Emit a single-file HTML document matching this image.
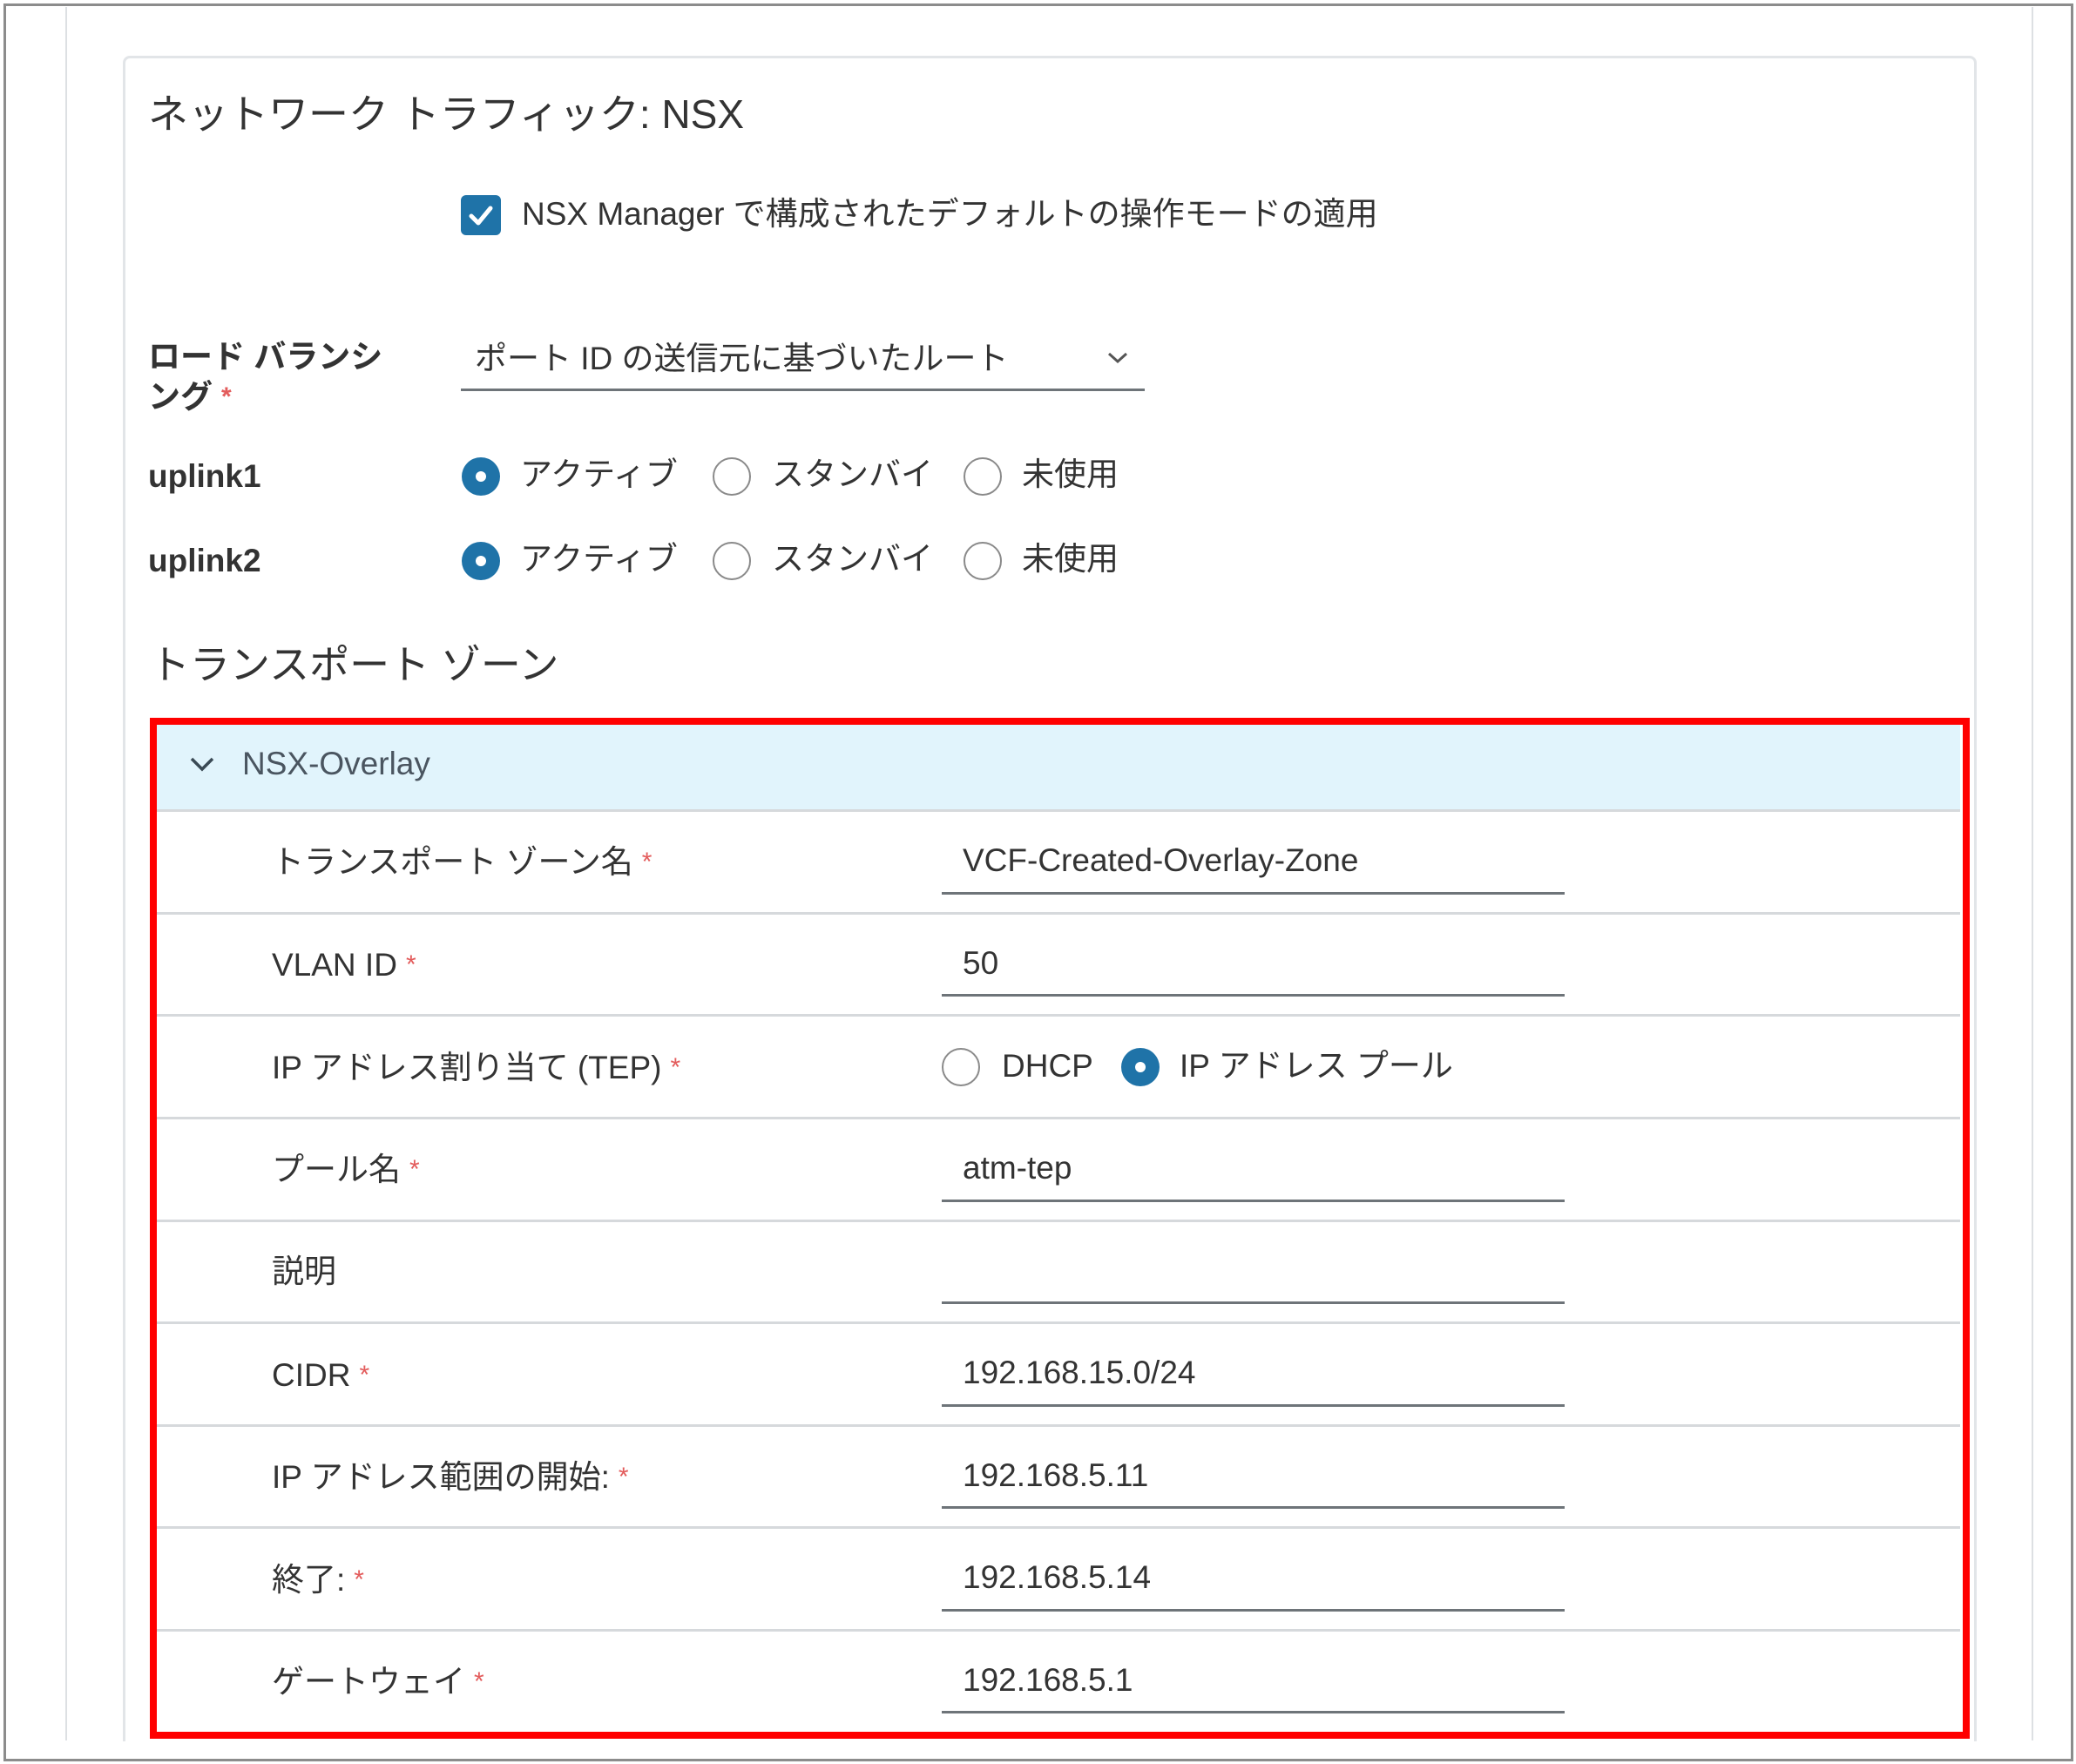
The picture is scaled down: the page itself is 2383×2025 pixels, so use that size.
<!DOCTYPE html>
<html><head><meta charset="utf-8"><style>
*{margin:0;padding:0;box-sizing:border-box}
html,body{width:2383px;height:2025px;overflow:hidden}
body{background:#fff;position:relative;font-family:"Liberation Sans","Noto Sans CJK JP",sans-serif;color:#333}
.a{position:absolute;white-space:nowrap}
.t{font-size:37px;line-height:44px;height:44px}
.req{color:#e35c5c;font-size:30px;vertical-align:top;margin-left:10px}
.rad{position:absolute;width:44px;height:44px;border-radius:50%;border:2px solid #8a8a8a;background:#fff}
.rad.on{border:none;background:#1f73a8}
.rad.on:after{content:"";position:absolute;left:16px;top:16px;width:12px;height:12px;border-radius:50%;background:#fff}
.sep{position:absolute;left:180px;width:2070px;height:3px;background:#d6d9dc}
.ul{position:absolute;left:1081px;width:715px;height:3px;background:#6e7479}
</style></head><body>
<div class="a" style="left:75px;top:8px;width:2px;height:1990px;background:#dde0e3"></div>
<div class="a" style="left:2332px;top:8px;width:2px;height:1990px;background:#dde0e3"></div>
<div class="a" style="left:141px;top:64px;width:2128px;height:1935px;border:3px solid #e2e5e8;border-bottom:none;border-radius:8px 8px 0 0"></div>
<div class="a" style="left:4px;top:4px;width:2376px;height:2018px;border:3px solid #8c8c8c"></div>

<div class="a" style="left:170px;top:105px;font-size:46px;line-height:52px;color:#333">ネットワーク トラフィック: NSX</div>

<div class="a" style="left:529px;top:224px;width:46px;height:46px;background:#1f73a8;border-radius:6px">
<svg width="46" height="46" viewBox="0 0 46 46"><path d="M12 24 L20 32 L34 15" fill="none" stroke="#fff" stroke-width="5" stroke-linecap="round" stroke-linejoin="round"/></svg></div>
<div class="a t" style="left:599px;top:224px">NSX Manager で構成されたデフォルトの操作モードの適用</div>

<div class="a t" style="left:170px;top:388px;font-weight:bold">ロード バランシ</div>
<div class="a t" style="left:170px;top:434px;font-weight:bold">ング<span class="req">*</span></div>
<div class="a t" style="left:545px;top:390px">ポート ID の送信元に基づいたルート</div>
<svg class="a" style="left:1270px;top:402px" width="26" height="18" viewBox="0 0 26 18"><path d="M3 4 L13 13 L23 4" fill="none" stroke="#555" stroke-width="3"/></svg>
<div class="a" style="left:529px;top:446px;width:785px;height:3px;background:#6e7479"></div>

<div class="a t" style="left:170px;top:525px;font-weight:bold">uplink1</div>
<div class="rad on" style="left:530px;top:525px"></div><div class="a t" style="left:597px;top:523px">アクティブ</div>
<div class="rad" style="left:818px;top:525px"></div><div class="a t" style="left:886px;top:523px">スタンバイ</div>
<div class="rad" style="left:1106px;top:525px"></div><div class="a t" style="left:1173px;top:523px">未使用</div>

<div class="a t" style="left:170px;top:622px;font-weight:bold">uplink2</div>
<div class="rad on" style="left:530px;top:622px"></div><div class="a t" style="left:597px;top:620px">アクティブ</div>
<div class="rad" style="left:818px;top:622px"></div><div class="a t" style="left:886px;top:620px">スタンバイ</div>
<div class="rad" style="left:1106px;top:622px"></div><div class="a t" style="left:1173px;top:620px">未使用</div>

<div class="a" style="left:172px;top:737px;font-size:46px;line-height:52px">トランスポート ゾーン</div>

<div class="a" style="left:180px;top:831px;width:2070px;height:99px;background:#e1f4fc"></div>
<svg class="a" style="left:216px;top:866px" width="32" height="22" viewBox="0 0 32 22"><path d="M4 5 L16 17 L28 5" fill="none" stroke="#3a4a55" stroke-width="3.5"/></svg>
<div class="a t" style="left:278px;top:855px;color:#4a5560">NSX-Overlay</div>

<div class="sep" style="top:929px"></div>
<div class="sep" style="top:1047px"></div>
<div class="sep" style="top:1164px"></div>
<div class="sep" style="top:1282px"></div>
<div class="sep" style="top:1400px"></div>
<div class="sep" style="top:1517px"></div>
<div class="sep" style="top:1635px"></div>
<div class="sep" style="top:1752px"></div>
<div class="sep" style="top:1870px"></div>

<div class="a t" style="left:312px;top:968px">トランスポート ゾーン名<span class="req">*</span></div>
<div class="a t" style="left:1105px;top:966px">VCF-Created-Overlay-Zone</div><div class="ul" style="top:1024px"></div>

<div class="a t" style="left:312px;top:1086px">VLAN ID<span class="req">*</span></div>
<div class="a t" style="left:1105px;top:1084px">50</div><div class="ul" style="top:1141px"></div>

<div class="a t" style="left:312px;top:1204px">IP アドレス割り当て (TEP)<span class="req">*</span></div>
<div class="rad" style="left:1081px;top:1203px"></div><div class="a t" style="left:1150px;top:1202px">DHCP</div>
<div class="rad on" style="left:1287px;top:1203px"></div><div class="a t" style="left:1354px;top:1202px">IP アドレス プール</div>

<div class="a t" style="left:312px;top:1321px">プール名<span class="req">*</span></div>
<div class="a t" style="left:1105px;top:1319px">atm-tep</div><div class="ul" style="top:1377px"></div>

<div class="a t" style="left:312px;top:1438px">説明</div>
<div class="ul" style="top:1494px"></div>

<div class="a t" style="left:312px;top:1557px">CIDR<span class="req">*</span></div>
<div class="a t" style="left:1105px;top:1554px">192.168.15.0/24</div><div class="ul" style="top:1612px"></div>

<div class="a t" style="left:312px;top:1674px">IP アドレス範囲の開始:<span class="req">*</span></div>
<div class="a t" style="left:1105px;top:1672px">192.168.5.11</div><div class="ul" style="top:1729px"></div>

<div class="a t" style="left:312px;top:1792px">終了:<span class="req">*</span></div>
<div class="a t" style="left:1105px;top:1789px">192.168.5.14</div><div class="ul" style="top:1847px"></div>

<div class="a t" style="left:312px;top:1909px">ゲートウェイ<span class="req">*</span></div>
<div class="a t" style="left:1105px;top:1907px">192.168.5.1</div><div class="ul" style="top:1964px"></div>

<div class="a" style="left:172px;top:824px;width:2089px;height:1172px;border:8px solid #ff0000;border-bottom:none"></div>
<div class="a" style="left:172px;top:1988px;width:2089px;height:8px;background:#ff0000"></div>
</body></html>
